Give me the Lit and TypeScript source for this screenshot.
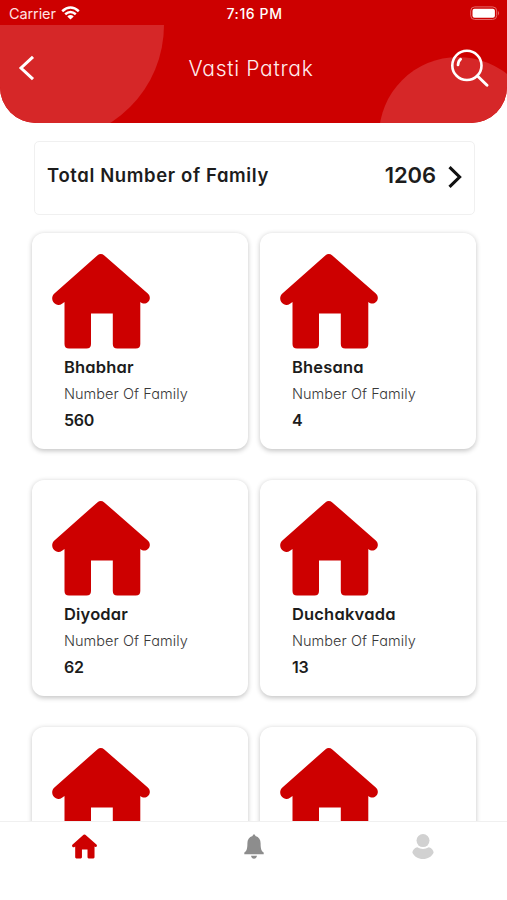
import { LitElement, html, css, svg, nothing } from "lit";
import { customElement, property } from "lit/decorators.js";

interface Village {
  name: string;
  families: string;
}

const villages: Village[] = [
  { name: "Bhabhar", families: "560" },
  { name: "Bhesana", families: "4" },
  { name: "Diyodar", families: "62" },
  { name: "Duchakvada", families: "13" },
  { name: "", families: "" },
  { name: "", families: "" },
];

const house = svg`<path d="M45.3 1.4Q48.8 -1.4 52.3 1.4L95.8 39.6C98.6 42.2 98.4 45.8 95.9 48C93.7 50 91 50.2 88.3 47.9V90Q88.3 94.5 83.8 94.5H65.3Q60.8 94.5 60.8 90V59.5H39V90Q39 94.5 34.5 94.5H17Q12.5 94.5 12.5 90V47.9L10 49.7C7.4 51.6 3.9 51.2 1.7 48.5C-.6 45.6 -.2 41.8 2.4 39.6Z"/>`;

@customElement("status-bar")
class StatusBar extends LitElement {
  static styles = css`
    :host { display: grid; grid-template-columns: 1fr auto 1fr; align-items: center; height: 25px; padding: 2px 7px 0 9px; box-sizing: border-box; background: #cd0000; color: #fff; font-size: 14.5px; line-height: 20px; font-feature-settings: normal; }
    .carrier { display: flex; align-items: center; gap: 5px; color: #ffe3e3; letter-spacing: -0.1px; }
    .time { font-weight: 500; font-size: 14px; letter-spacing: 0.6px; }
    .battery { justify-self: end; }
    svg { display: block; position: relative; top: -1px; }
    .battery { top: 0; }
  `;
  render() {
    return html`
      <div class="carrier">
        <span>Carrier</span>
        <svg width="19" height="14" viewBox="0 0 19 14" fill="none" stroke="#fff" stroke-width="2.5">
          <path d="M1.2 5.2Q9.5 -2.2 17.8 5.2" />
          <path d="M4.2 8.3Q9.5 3.7 14.8 8.3" />
          <path d="M9.5 13.6L6.3 10.4Q9.5 7.8 12.7 10.4Z" fill="#fff" stroke="none" />
        </svg>
      </div>
      <span class="time">7:16 PM</span>
      <svg class="battery" width="30" height="15" viewBox="0 0 30 15">
        <rect x=".7" y=".9" width="26" height="12.6" rx="4" fill="none" stroke="#e46a6a" stroke-width="1" />
        <rect x="2.5" y="2.7" width="22.4" height="9" rx="2" fill="#fff" />
        <path d="M28 4.9Q30 7.1 28 9.4Z" fill="#e46a6a" />
      </svg>
    `;
  }
}

@customElement("title-bar")
class TitleBar extends LitElement {
  static styles = css`
    :host { display: flex; align-items: center; justify-content: space-between; position: relative; height: 98px; padding: 0 18px 12px 18px; box-sizing: border-box; background: #cd0000; border-radius: 0 0 36px 36px; overflow: hidden; color: #fff; }
    .shapes { position: absolute; inset: 0; }
    .icon, h1 { position: relative; }
    svg { display: block; }
    h1 { margin: 0; font-size: 21px; line-height: 28px; font-weight: 350; color: #ffeded; letter-spacing: 0.7px; padding: 1px 0 0 16px; }
  `;
  render() {
    return html`
      <svg class="shapes" width="507" height="98" fill="#d62728">
        <circle cx="48" cy="0" r="116" />
        <circle cx="458" cy="111" r="79" />
      </svg>
      <svg class="icon" width="18" height="26" viewBox="0 0 18 26" fill="none" stroke="#fff" stroke-width="3">
        <path d="M15 1.8L3 13L15 24.2" />
      </svg>
      <h1>Vasti Patrak</h1>
      <svg class="icon" width="39" height="38" viewBox="0 0 39 38" fill="none" stroke="#fff" stroke-linecap="round">
        <circle cx="16.9" cy="16.4" r="14.6" stroke-width="2.6" />
        <path d="M27.5 27L37 36.2" stroke-width="2.9" />
        <path d="M8 16Q8.2 12 10.7 10.2" stroke-width="2.7" />
      </svg>
    `;
  }
}

@customElement("village-card")
class VillageCard extends LitElement {
  @property({ attribute: false }) village!: Village;
  static styles = css`
    :host { display: block; height: 216px; padding: 20.5px 0 0 19.5px; box-sizing: border-box; background: #fff; border-radius: 12px; box-shadow: 0 1.5px 5px rgba(0, 0, 0, 0.23); color: #1c1c1c; }
    .house { display: block; fill: #cd0000; }
    .text { padding-left: 12.4px; padding-top: 5px; }
    .name, .count { font-weight: 600; font-size: 16.5px; line-height: 26px; letter-spacing: 0.2px; }
    .count { font-size: 16px; letter-spacing: -0.2px; }
    .label { font-weight: 300; font-size: 14.5px; line-height: 26px; padding-top: 1px; color: #383838; letter-spacing: 0.06px; }
  `;
  render() {
    return html`
      <svg class="house" width="98" height="95" viewBox="0 0 98 95">${house}</svg>
      ${this.village.name
        ? html`<div class="text">
            <div class="name">${this.village.name}</div>
            <div class="label">Number Of Family</div>
            <div class="count">${this.village.families}</div>
          </div>`
        : nothing}
    `;
  }
}

@customElement("tab-bar")
class TabBar extends LitElement {
  static styles = css`
    :host { display: grid; grid-template-columns: repeat(3, 1fr); justify-items: center; align-items: start; height: 79px; padding-top: 11.5px; box-sizing: border-box; background: #fff; border-top: 1px solid #f0f0f0; }
    svg { display: block; }
  `;
  render() {
    return html`
      <svg width="25" height="25" viewBox="0 0 98 95" fill="#cd0000">${house}</svg>
      <svg width="20" height="25" viewBox="0 0 20 25" fill="#8d8d8d">
        <path d="M10 .4C11 .4 11.3 1 11.4 2C15 3 16.6 5.8 16.6 9.2C16.6 14.7 17.4 17 19.7 18.6V20.3H.3V18.6C2.6 17 3.4 14.7 3.4 9.2C3.4 5.8 5 3 8.6 2C8.7 1 9 .4 10 .4ZM7 21.7H13Q12.4 24.7 10 24.7Q7.6 24.7 7 21.7Z" />
      </svg>
      <svg width="22" height="26" viewBox="0 0 22 26" fill="#d1d1d1">
        <circle cx="11" cy="6.6" r="6.5" />
        <path d="M5.2 13.2Q11 16.7 16.8 13.2C19.8 14 21.6 16.3 21.6 18.7C19.8 22.5 15.8 25 11 25S2.2 22.5 .4 18.7C.4 16.3 2.2 14 5.2 13.2Z" />
      </svg>
    `;
  }
}

@customElement("app-root")
class AppRoot extends LitElement {
  static styles = css`
    :host { display: flex; flex-direction: column; height: 900px; overflow: hidden; background: #fff; font-family: Inter, "Liberation Sans", sans-serif; font-feature-settings: "cv11"; }
    status-bar, title-bar, tab-bar { flex: none; }
    main { flex: 1; min-height: 0; overflow: hidden; padding: 18px 31px 0 32px; }
    .total { display: flex; height: 74px; margin: 0 1px 0 1.5px; padding: 0 12px 6px 12.5px; box-sizing: border-box; align-items: center; border: 1.5px solid #f0f0f0; border-radius: 5px; color: #1c1c1c; font-weight: 600; }
    .total-label { flex: 1; font-size: 18.5px; letter-spacing: 0.62px; }
    .total-count { font-size: 22px; letter-spacing: -0.1px; margin-right: 12px; }
    .total svg { display: block; position: relative; top: 2px; }
    .grid { display: grid; grid-template-columns: repeat(2, 1fr); gap: 31px 12px; padding-top: 18px; }
  `;
  render() {
    return html`
      <status-bar></status-bar>
      <title-bar></title-bar>
      <main>
        <div class="total">
          <span class="total-label">Total Number of Family</span>
          <span class="total-count">1206</span>
          <svg width="14" height="22" viewBox="0 0 14 22" fill="none" stroke="#111" stroke-width="3.1">
            <path d="M1.5 1.2L11.6 11L1.5 20.8" />
          </svg>
        </div>
        <div class="grid">${villages.map((v) => html`<village-card .village=${v}></village-card>`)}</div>
      </main>
      <tab-bar></tab-bar>
    `;
  }
}
